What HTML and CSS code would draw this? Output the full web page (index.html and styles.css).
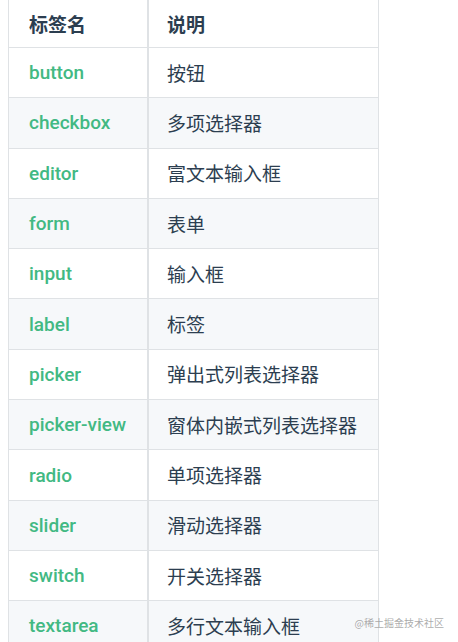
FILE: index.html
```html
<!DOCTYPE html>
<html lang="zh-CN">
<head>
<meta charset="utf-8">
<title>组件标签</title>
<link rel="stylesheet" href="styles.css">
</head>
<body>
<table class="tags">
  <thead>
    <tr><th>标签名</th><th>说明</th></tr>
  </thead>
  <tbody>
    <tr><td class="tag">button</td><td>按钮</td></tr>
    <tr><td class="tag">checkbox</td><td>多项选择器</td></tr>
    <tr><td class="tag">editor</td><td>富文本输入框</td></tr>
    <tr><td class="tag">form</td><td>表单</td></tr>
    <tr><td class="tag">input</td><td>输入框</td></tr>
    <tr><td class="tag">label</td><td>标签</td></tr>
    <tr><td class="tag">picker</td><td>弹出式列表选择器</td></tr>
    <tr><td class="tag">picker-view</td><td>窗体内嵌式列表选择器</td></tr>
    <tr><td class="tag">radio</td><td>单项选择器</td></tr>
    <tr><td class="tag">slider</td><td>滑动选择器</td></tr>
    <tr><td class="tag">switch</td><td>开关选择器</td></tr>
    <tr><td class="tag">textarea</td><td>多行文本输入框</td></tr>
  </tbody>
</table>
<div class="watermark">@稀土掘金技术社区</div>
</body>
</html>
```
FILE: styles.css
```css
html, body {
  margin: 0;
  padding: 0;
  background: #ffffff;
}
body {
  font-family: "Noto Sans", "Noto Sans CJK SC", sans-serif;
  font-size: 19px;
  color: #2c3e50;
  overflow: hidden;
  height: 642px;
  position: relative;
}
.tags {
  border-collapse: collapse;
  margin: -1px 0 0 8px;
  width: 371px;
  table-layout: fixed;
}
.tags th, .tags td {
  border: 1px solid #dfe2e5;
  text-align: left;
  padding: 0 0 0 20px;
  white-space: nowrap;
}
.tags th:first-child, .tags td:first-child {
  width: 118px;
}
.tags th:last-child, .tags td:last-child {
  border-left-width: 2px;
  padding-left: 18px;
}
.tags th {
  height: 47px;
  font-weight: 700;
  color: #2c3e50;
}
.tags td {
  height: 49.3px;
  color: #2c3e50;
}
.tags tbody tr:nth-child(even) td {
  background: #f6f8fa;
}
.tags td.tag {
  color: #42b983;
  font-family: Roboto, "Noto Sans", sans-serif;
  font-weight: 500;
}
.watermark {
  position: absolute;
  right: 14px;
  top: 615px;
  font-size: 10px;
  color: rgba(150, 150, 150, 0.8);
  font-family: "Noto Sans CJK SC", sans-serif;
}
```
